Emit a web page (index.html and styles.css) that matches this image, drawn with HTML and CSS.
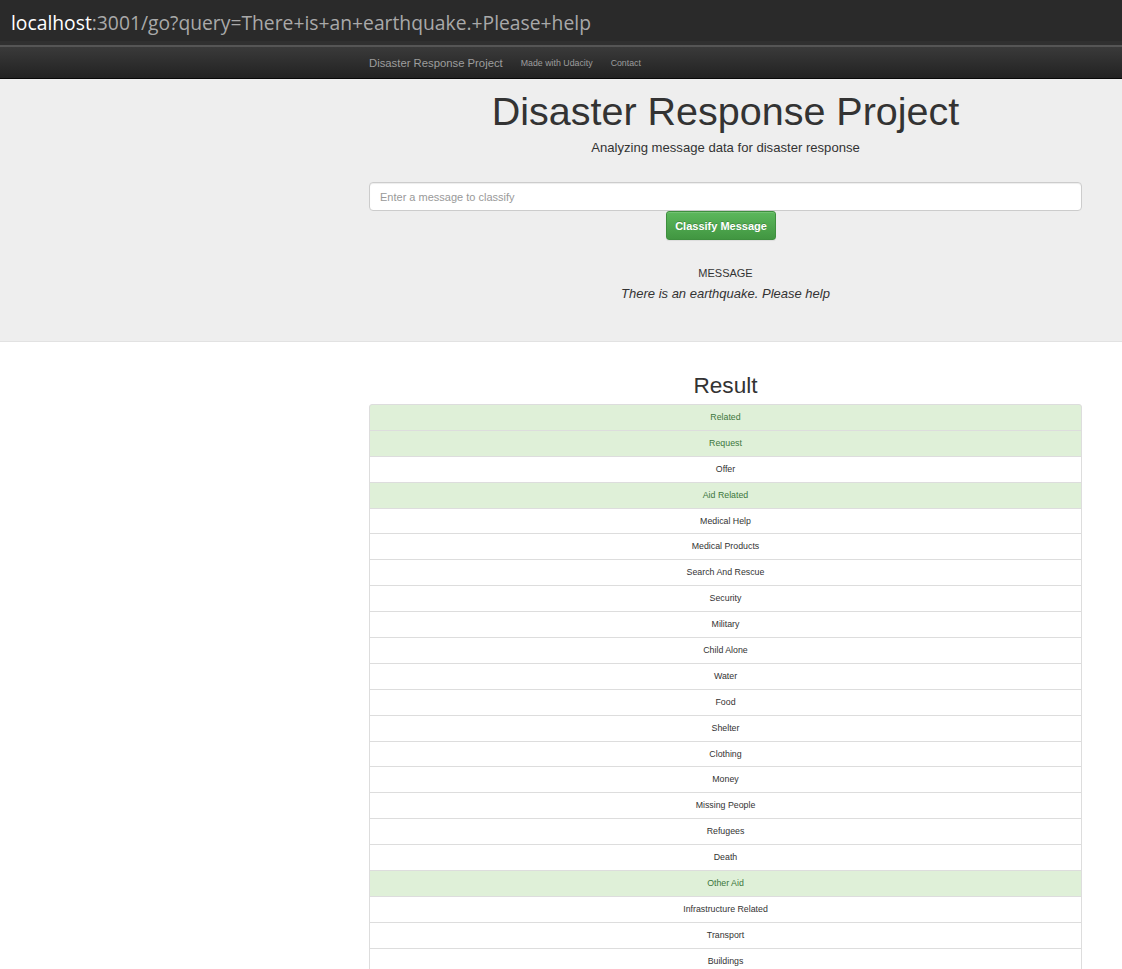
FILE: index.html
```html
<!DOCTYPE html>
<html>
<head>
<meta charset="utf-8">
<title>Disaster Response Project</title>
<link rel="stylesheet" href="styles.css">
</head>
<body>
<div class="addressbar"><span class="host">localhost</span><span class="rest">:3001/go?query=There+is+an+earthquake.+Please+help</span></div>
<div class="addr-gap"></div>
<nav class="navbar">
  <div class="container nav-inner">
    <a class="brand">Disaster Response Project</a>
    <a class="nav-link">Made with Udacity</a>
    <a class="nav-link">Contact</a>
  </div>
</nav>
<header class="jumbotron">
  <div class="container">
    <h1 class="title">Disaster Response Project</h1>
    <p class="subtitle">Analyzing message data for disaster response</p>
    <form class="classify-form">
      <input class="msg-input" type="text" placeholder="Enter a message to classify">
      <div class="btn-row"><button class="btn-success" type="button">Classify Message</button></div>
    </form>
    <div class="message-block">
      <div class="message-label">MESSAGE</div>
      <div class="message-text">There is an earthquake. Please help</div>
    </div>
  </div>
</header>
<main class="container results">
  <h2 class="result-title">Result</h2>
  <ul class="list-group">
    <li class="item success">Related</li>
    <li class="item success">Request</li>
    <li class="item">Offer</li>
    <li class="item success">Aid Related</li>
    <li class="item">Medical Help</li>
    <li class="item">Medical Products</li>
    <li class="item">Search And Rescue</li>
    <li class="item">Security</li>
    <li class="item">Military</li>
    <li class="item">Child Alone</li>
    <li class="item">Water</li>
    <li class="item">Food</li>
    <li class="item">Shelter</li>
    <li class="item">Clothing</li>
    <li class="item">Money</li>
    <li class="item">Missing People</li>
    <li class="item">Refugees</li>
    <li class="item">Death</li>
    <li class="item success">Other Aid</li>
    <li class="item">Infrastructure Related</li>
    <li class="item">Transport</li>
    <li class="item">Buildings</li>
  </ul>
</main>
</body>
</html>
```
FILE: styles.css
```css
html, body {
  margin: 0;
  padding: 0;
}
body {
  font-family: "Liberation Sans", Arial, sans-serif;
  color: #333;
  background: #fff;
  overflow: hidden;
  height: 969px;
}
.container {
  width: 713px;
  margin-left: 369px;
}
.addressbar {
  height: 41px;
  background: #2a2a2a;
  font-family: "Open Sans", "Noto Sans", sans-serif;
  font-size: 19.3px;
  line-height: 41px;
  padding: 2px 0 0 11px;
  box-sizing: border-box;
  white-space: nowrap;
}
.host { color: #fff; }
.rest { color: #a9a9a9; }
.addr-gap {
  height: 4px;
  background: #303030;
  border-bottom: 2px solid #555;
}
.navbar {
  height: 31px;
  background: linear-gradient(to bottom, #3a3a3a 0%, #222 100%);
  border-bottom: 1px solid #080808;
}
.nav-inner {
  display: flex;
  align-items: center;
  height: 31px;
}
.brand {
  color: #9d9d9d;
  font-size: 11.3px;
  margin-right: 18px;
}
.nav-link {
  color: #9d9d9d;
  font-size: 8.8px;
  margin-right: 18px;
}
.jumbotron {
  background: #eee;
  height: 263px;
  box-shadow: inset 0 -1px 0 #e2e2e2;
  overflow: hidden;
}
.title {
  margin: 10px 0 0;
  font-size: 39.5px;
  font-weight: 400;
  line-height: 44px;
  text-align: center;
}
.subtitle {
  margin: 6px 0 0;
  font-size: 13.1px;
  line-height: 18px;
  text-align: center;
}
.classify-form {
  margin-top: 25px;
}
.msg-input {
  display: block;
  width: 713px;
  height: 29px;
  box-sizing: border-box;
  border: 1px solid #ccc;
  border-radius: 4px;
  padding: 0 10px;
  font-family: "Liberation Sans", Arial, sans-serif;
  font-size: 11px;
  background: #fff;
  box-shadow: inset 0 1px 1px rgba(0,0,0,.075);
  margin: 0;
}
.msg-input::placeholder { color: #999; }
.btn-row {
  display: flex;
  justify-content: center;
  padding-right: 9px;
}
.btn-success {
  width: 110px;
  height: 29px;
  border: 1px solid #3e8f3e;
  border-radius: 3px;
  background: linear-gradient(to bottom, #5cb85c 0%, #419641 100%);
  color: #fff;
  font-family: "Liberation Sans", Arial, sans-serif;
  font-weight: 700;
  font-size: 11px;
  padding: 0;
  box-shadow: inset 0 1px 0 rgba(255,255,255,.15), 0 1px 1px rgba(0,0,0,.075);
  text-shadow: 0 -1px 0 rgba(0,0,0,.2);
}
.message-block {
  margin-top: 26px;
  text-align: center;
}
.message-label {
  font-size: 11px;
  line-height: 14px;
}
.message-text {
  margin-top: 5px;
  font-size: 13px;
  font-style: italic;
  line-height: 18px;
}
.results {
  padding-top: 31px;
}
.result-title {
  margin: 0 0 5px;
  font-size: 22.6px;
  font-weight: 400;
  line-height: 26px;
  text-align: center;
}
.list-group {
  list-style: none;
  margin: 0;
  padding: 0;
}
.item {
  height: 26.9px;
  box-sizing: border-box;
  border: 1px solid #ddd;
  margin-bottom: -1px;
  background: #fff;
  font-size: 8.8px;
  line-height: 24.9px;
  text-align: center;
  color: #333;
}
.item:first-child { border-radius: 3px 3px 0 0; }
.item.success {
  background: #dff0d8;
  color: #3c763d;
}
```
